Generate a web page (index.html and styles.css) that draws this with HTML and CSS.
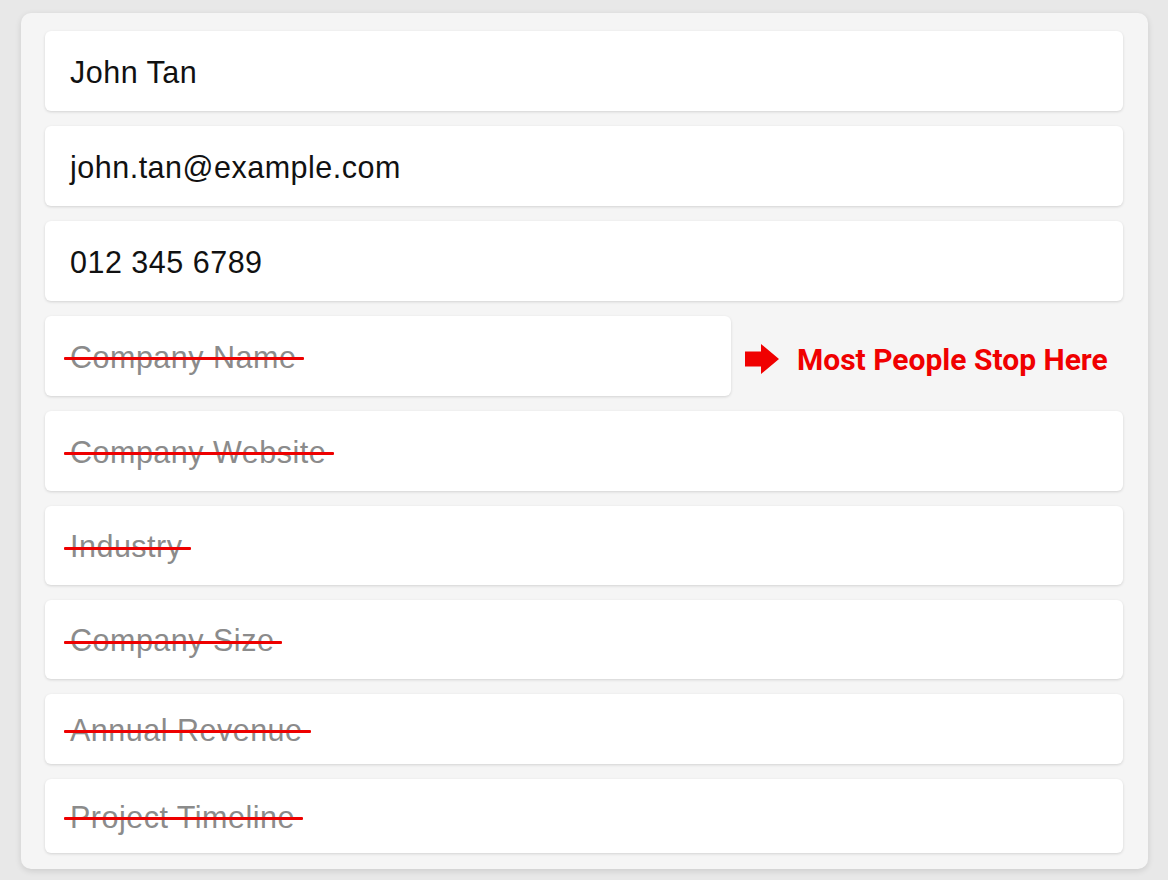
FILE: index.html
```html
<!DOCTYPE html>
<html lang="en">
<head>
    <meta charset="UTF-8">
    <meta name="viewport" content="width=device-width, initial-scale=1.0">
    <title>Contact Form</title>
    <link rel="stylesheet" href="styles.css">
</head>
<body>
    <div class="card">
        <div class="field"><span class="value">John Tan</span></div>
        <div class="field"><span class="value">john.tan@example.com</span></div>
        <div class="field"><span class="value">012 345 6789</span></div>

        <div class="row">
            <div class="field short"><span class="hint">Company Name</span></div>
            <div class="note">
                <svg class="arrow" width="34" height="30" viewBox="0 0 34 30">
                    <path d="M0 7.5 H16 V0 L34 15 L16 30 V22.5 H0 Z" fill="#f00000"/>
                </svg>
                <span>Most People Stop Here</span>
            </div>
        </div>

        <div class="field"><span class="hint">Company Website</span></div>
        <div class="field h79"><span class="hint">Industry</span></div>
        <div class="field h79"><span class="hint">Company Size</span></div>
        <div class="field h70"><span class="hint">Annual Revenue</span></div>
        <div class="field h74"><span class="hint">Project Timeline</span></div>
    </div>
</body>
</html>
```

FILE: styles.css
```css
body {
    margin: 0;
    padding: 13px 20px 11px 21px;
    background-color: #e8e8e8;
    font-family: "Liberation Sans", Arial, sans-serif;
}
.card {
    background-color: #f5f5f5;
    border-radius: 10px;
    box-shadow: 0 2px 6px rgba(0, 0, 0, 0.12);
    padding: 18px 25px 16px 24px;
    display: flex;
    flex-direction: column;
    gap: 15px;
}
.field {
    height: 80px;
    background-color: #fff;
    border-radius: 6px;
    box-shadow: 0 1px 3px rgba(0, 0, 0, 0.14);
    display: flex;
    align-items: center;
    padding-left: 25px;
    font-size: 30.5px;
    letter-spacing: 0.5px;
}
.h79 {
    height: 79px;
}
.h70 {
    height: 70px;
}
.h74 {
    height: 74px;
}
.value {
    color: #111;
    padding-top: 2px;
}
.hint {
    color: #8b8b8b;
    position: relative;
    padding-top: 2px;
}
/* red strike drawn over the placeholder text */
.hint::after {
    content: "";
    position: absolute;
    left: -6px;
    right: -8px;
    top: 53%;
    height: 3px;
    background-color: #ee0000;
    border-radius: 1px;
}
.row {
    display: flex;
    align-items: center;
    gap: 14px;
}
.short {
    width: 661px;
    flex: none;
}
.note {
    display: flex;
    align-items: center;
    gap: 18px;
    color: #f00000;
    font-family: Roboto, "Liberation Sans", sans-serif;
    font-weight: bold;
    font-size: 30px;
    padding-top: 6px;
}
.arrow {
    flex: none;
    margin-top: -1px;
}
```
